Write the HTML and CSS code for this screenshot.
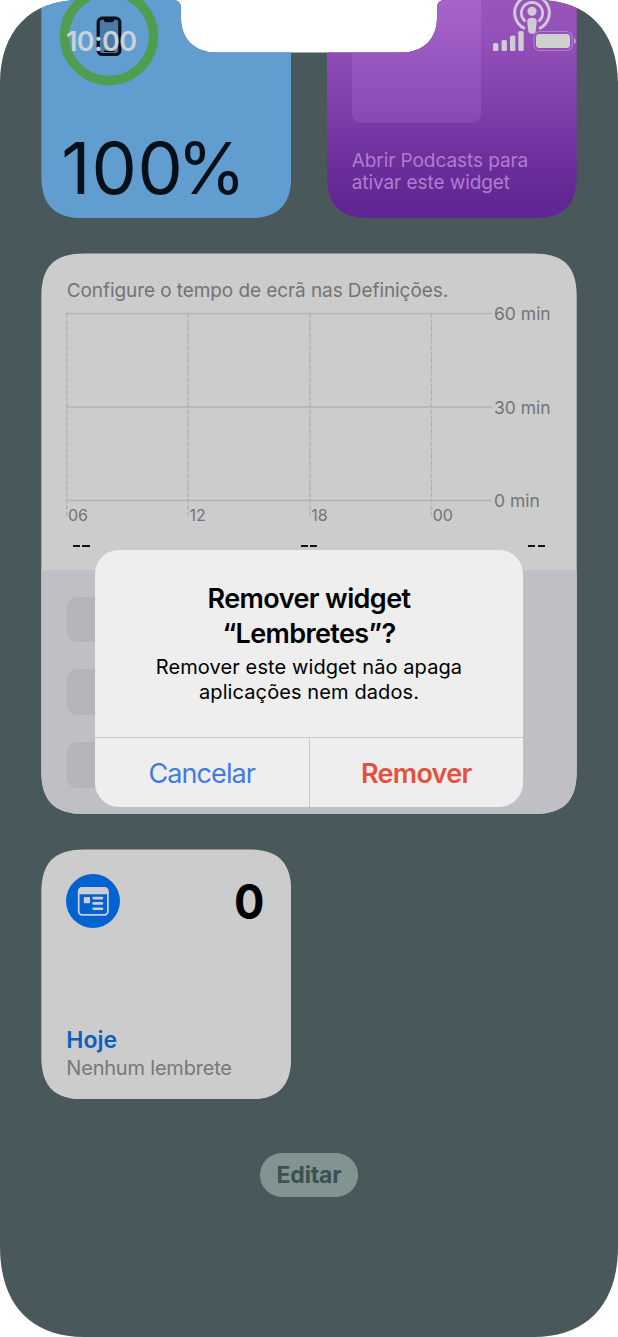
FILE: index.html
```html
<!DOCTYPE html>
<html lang="pt">
<head>
<meta charset="utf-8">
<title>Widgets</title>
<link rel="stylesheet" href="styles.css">
</head>
<body>
<main class="screen">
  <section class="row">
    <article class="card battery">
      <svg class="ring" width="100" height="100" viewBox="0 0 100 100">
        <circle cx="50" cy="50" r="44.5" fill="none" stroke="#519d50" stroke-width="9.4"/>
        <rect x="39.2" y="32.1" width="21.6" height="36.4" rx="4" fill="#4c7aa7" stroke="#07111b" stroke-width="3.2"/>
        <path d="M45 32h10v2.2a2 2 0 0 1-2 2h-6a2 2 0 0 1-2-2z" fill="#07111b"/>
        <path d="M45.5 65.2h9.5" stroke="#07111b" stroke-width="1.4" stroke-linecap="round"/>
      </svg>
      <p class="percent">100<span>%</span></p>
    </article>
    <article class="card podcasts">
      <div class="artwork"></div>
      <svg class="podcast-icon" width="40" height="36" viewBox="0 0 40 36" fill="none" stroke="#d0cad4">
        <path d="M12.8 30.6A17.3 17.3 0 1 1 27.2 30.6" stroke-width="2.9"/>
        <path d="M13.4 23.5A10.7 10.7 0 1 1 26.6 23.5" stroke-width="2.7"/>
        <circle cx="20" cy="13.3" r="4.6" fill="#d0cad4" stroke="none"/>
        <path d="M15.2 23.5q0-3.7 4.8-3.7t4.8 3.7l-1.1 9.7q-.4 2.5-3.7 2.5t-3.7-2.5z" fill="#d0cad4" stroke="none"/>
      </svg>
      <p class="podcast-text">Abrir Podcasts para<br>ativar este widget</p>
    </article>
  </section>

  <article class="card usage">
    <p class="usage-title">Configure o tempo de ecrã nas Definições.</p>
    <div class="chart">
      <svg width="427" height="206" viewBox="0 0 427 206" fill="none">
        <path d="M0 1.5H426M0 95H426M0 188.5H426" stroke="#b3b3b3" stroke-width="1.6"/>
        <path d="M.7 1V205M122 1V205M244 1V205M365.5 1V205" stroke="#b2b2b2" stroke-width="1.4" stroke-dasharray="4.8 1.6"/>
      </svg>
      <div class="scale"><span>60 min</span><span>30 min</span><span>0 min</span></div>
    </div>
    <div class="hours"><span>06</span><span>12</span><span>18</span><span>00</span></div>
    <div class="dashes"><i></i><i></i><i></i></div>
    <div class="apps"><b></b><b></b><b></b></div>
  </article>

  <article class="card reminders">
    <div class="rem-head">
      <svg width="54" height="54" viewBox="0 0 54 54">
        <circle cx="27" cy="27" r="27" fill="#0262d0"/>
        <rect x="12.7" y="13.8" width="29.2" height="27" rx="3.5" fill="none" stroke="#ccced2" stroke-width="1.8"/>
        <path d="M12.5 20.2v-3.7q0-3 3-3h23.6q3 0 3 3v3.7z" fill="#ccced2"/>
        <rect x="17.8" y="23" width="6.2" height="6.2" rx=".8" fill="#ccced2"/>
        <path d="M27.6 24.1h8.4M27.6 29.4h8.4M27.6 34.7h8.4" stroke="#ccced2" stroke-width="2.6" stroke-linecap="round"/>
      </svg>
      <span class="count">0</span>
    </div>
    <p class="today">Hoje</p>
    <p class="none">Nenhum lembrete</p>
  </article>

  <button class="edit">Editar</button>

  <header class="status">
    <span class="clock">10:00</span>
    <svg width="84" height="24" viewBox="0 0 84 24" fill="#d0cbd3">
      <rect x="0" y="14" width="5.4" height="8" rx="1.5"/>
      <rect x="8.5" y="11" width="5.4" height="11" rx="1.5"/>
      <rect x="17" y="6.5" width="5.4" height="15.5" rx="1.5"/>
      <rect x="25.3" y="2" width="5.4" height="20" rx="1.5"/>
      <rect x="41" y="2.5" width="38.2" height="19" rx="5.5" fill="none" stroke="#b794cc" stroke-opacity=".75" stroke-width="1.2"/>
      <rect x="43" y="5" width="34" height="14" rx="3.4" fill="#d0d0d0"/>
      <path d="M81 9q2.2 1 2.2 3T81 15z" fill="#b794cc"/>
    </svg>
  </header>

  <div class="alert" role="alertdialog">
    <h1>Remover widget<br>“Lembretes”?</h1>
    <p>Remover este widget não apaga<br>aplicações nem dados.</p>
    <div class="actions"><button class="cancel">Cancelar</button><button class="remove">Remover</button></div>
  </div>
</main>
</body>
</html>
```
FILE: styles.css
```css
* { box-sizing: border-box; margin: 0; padding: 0; }
body { background: #fff; font-family: Inter, sans-serif; }
button { border: 0; background: none; font: inherit; }
p, span, h1, button { white-space: nowrap; }

.screen {
  position: relative;
  width: 618px;
  height: 1337px;
  padding: 0 41.3px;
  background: #49585b;
  clip-path: path("M0 84C0 31 30 0 80 0H173Q181 0 181 8V18C181 39 195 52.5 216 52.5H402C423 52.5 437 39 437 18V8Q437 0 445 0H538C588 0 618 31 618 84V1247C618 1304 587 1337 534 1337H84C31 1337 0 1304 0 1247Z");
}
.row { display: flex; justify-content: space-between; height: 218.3px; }
.card { background: #ccc; }
.row .card {
  width: 250px;
  clip-path: path("M0 0H250V175.3C250 205.3 237 218.3 207 218.3H43C13 218.3 0 205.3 0 175.3Z");
}

.battery { background: #629dcf; }
.ring { display: block; margin: -14.3px 0 0 18px; }
.percent {
  margin: 37px 0 0 20px;
  font-size: 72px;
  line-height: 90px;
  letter-spacing: .8px;
  color: #06101a;
}
.percent span { display: inline-block; transform: scaleX(.97); transform-origin: 100% 50%; margin-left: -9px; }

.podcasts {
  display: grid;
  grid-template: 123px 1fr / 129.5px 1fr;
  padding-left: 25px;
  background: linear-gradient(#9954bc 0, #9652bb 30px, #7e3eaa 110px, #6a2c99 170px, #5f2592 218px);
}
.artwork {
  border-radius: 0 0 9px 9px;
  background: linear-gradient(#a763ca 0, #9857c0 60px, #8649b3 123px);
}
.podcast-icon { margin: -2px 0 0 31px; }
.podcast-text {
  grid-column: 1 / 3;
  padding-top: 26.7px;
  font-size: 19px;
  line-height: 22px;
  letter-spacing: -.07px;
  color: #b37bd0;
}

.usage {
  height: 560.5px;
  margin-top: 35.2px;
  padding-top: 26px;
  clip-path: path("M0 43C0 13 13 0 43 0H492.4C522.4 0 535.4 13 535.4 43V517.5C535.4 547.5 522.4 560.5 492.4 560.5H43C13 560.5 0 547.5 0 517.5Z");
  color: #737476;
}
.usage-title { padding-left: 25.4px; font-size: 19px; line-height: 24px; letter-spacing: -.08px; }
.chart { display: flex; margin: 8.8px 0 0 24.7px; }
.scale {
  display: flex;
  flex-direction: column;
  justify-content: space-between;
  height: 209px;
  margin: -9px 0 0 1px;
  font-size: 17.5px;
  line-height: 22px;
}
.hours { display: flex; margin: -13.5px 0 0 26.7px; font-size: 16px; line-height: 20px; }
.hours span { width: 121.6px; }
.dashes { display: flex; justify-content: space-between; margin: 19.9px 32.2px 0 31.8px; }
.dashes i { width: 16.5px; height: 2px; background: linear-gradient(90deg, #111 7px, transparent 7px 9.5px, #111 9.5px); }
.apps {
  display: grid;
  gap: 27px;
  align-content: start;
  height: 250px;
  margin-top: 23.4px;
  padding: 26.6px 25.5px;
  background: #c0bfc5;
}
.apps b { width: 46px; height: 45.7px; border-radius: 10px; background: #b5b4ba; }

.reminders {
  width: 250px;
  height: 250px;
  margin-top: 35.4px;
  padding: 24.8px 27px 0 25px;
  clip-path: path("M0 43C0 13 13 0 43 0H207C237 0 250 13 250 43V207C250 237 237 250 207 250H43C13 250 0 237 0 207Z");
}
.rem-head { display: flex; justify-content: space-between; align-items: center; }
.count { font-size: 48px; line-height: 54px; font-weight: 700; color: #000; transform: translateY(1px) scaleX(.94); transform-origin: 100% 50%; }
.today { margin-top: 98px; font-size: 23px; line-height: 28px; font-weight: 600; color: #0b60c2; }
.none { font-size: 20px; line-height: 28px; letter-spacing: -.2px; color: #77787a; }

.edit {
  display: block;
  width: 98px;
  height: 44px;
  margin: 53.9px auto 0;
  border-radius: 22px;
  background: #829492;
  color: #3b5150;
  font-size: 23px;
  font-weight: 700;
  line-height: 44px;
  letter-spacing: -.15px;
}

.status {
  position: absolute;
  top: 29px;
  left: 66px;
  width: 511px;
  display: flex;
  justify-content: space-between;
}
.clock { font-size: 27px; line-height: 25px; font-weight: 600; letter-spacing: -.6px; color: #c9d1d9; }

.alert {
  position: absolute;
  top: 550px;
  left: 95px;
  width: 428px;
  height: 257px;
  padding-top: 30.5px;
  display: flex;
  flex-direction: column;
  overflow: hidden;
  border-radius: 24px;
  background: #eee;
  color: #000;
  text-align: center;
}
.alert h1 { font-size: 27px; line-height: 35px; font-weight: 600; letter-spacing: -.6px; }
.alert p { margin-top: 4px; font-size: 20px; line-height: 25.5px; letter-spacing: .1px; }
.actions { display: flex; height: 70px; margin-top: auto; border-top: 1px solid #c8c9ca; }
.actions button { flex: 1; font-size: 27px; line-height: 71px; letter-spacing: -.9px; }
.cancel { border-right: 1px solid #c8c9ca; color: #3f7ae5; }
.actions .remove { font-weight: 600; letter-spacing: -.7px; color: #e4523f; }
```
